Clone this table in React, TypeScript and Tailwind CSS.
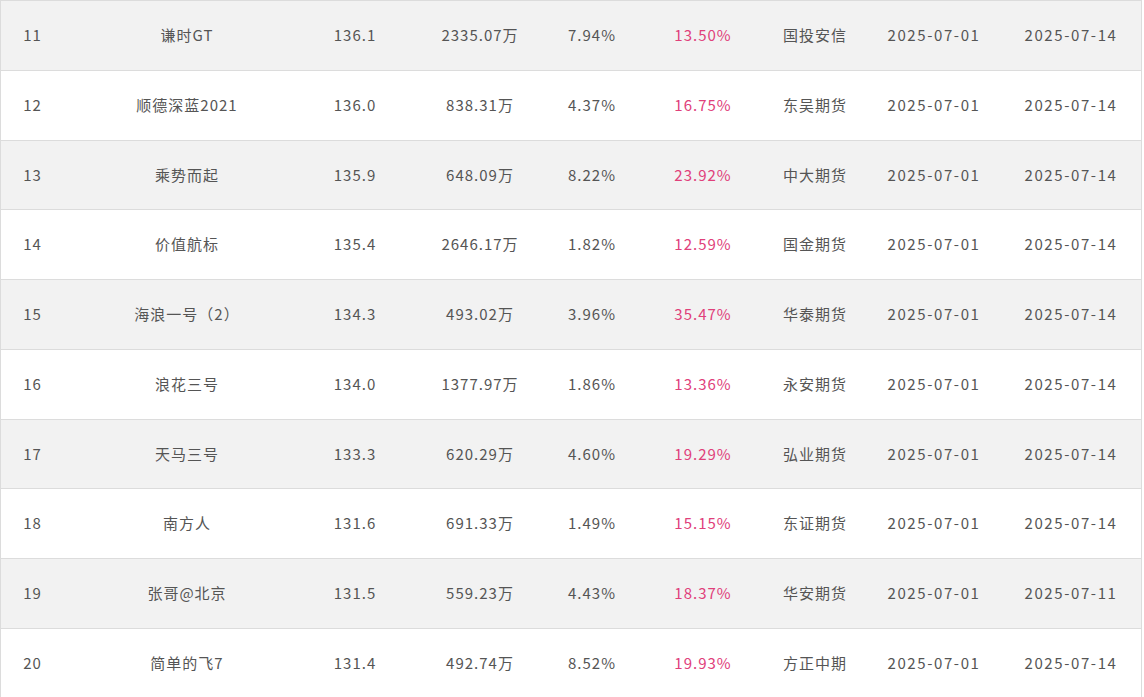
const rows = [
  ["11", "谦时GT", "136.1", "2335.07万", "7.94%", "13.50%", "国投安信", "2025-07-01", "2025-07-14"],
  ["12", "顺德深蓝2021", "136.0", "838.31万", "4.37%", "16.75%", "东吴期货", "2025-07-01", "2025-07-14"],
  ["13", "乘势而起", "135.9", "648.09万", "8.22%", "23.92%", "中大期货", "2025-07-01", "2025-07-14"],
  ["14", "价值航标", "135.4", "2646.17万", "1.82%", "12.59%", "国金期货", "2025-07-01", "2025-07-14"],
  ["15", "海浪一号（2）", "134.3", "493.02万", "3.96%", "35.47%", "华泰期货", "2025-07-01", "2025-07-14"],
  ["16", "浪花三号", "134.0", "1377.97万", "1.86%", "13.36%", "永安期货", "2025-07-01", "2025-07-14"],
  ["17", "天马三号", "133.3", "620.29万", "4.60%", "19.29%", "弘业期货", "2025-07-01", "2025-07-14"],
  ["18", "南方人", "131.6", "691.33万", "1.49%", "15.15%", "东证期货", "2025-07-01", "2025-07-14"],
  ["19", "张哥@北京", "131.5", "559.23万", "4.43%", "18.37%", "华安期货", "2025-07-01", "2025-07-11"],
  ["20", "简单的飞7", "131.4", "492.74万", "8.52%", "19.93%", "方正中期", "2025-07-01", "2025-07-14"],
];

export default function App() {
  return (
    <div className="w-[1142px] border-x border-[#dcdcdc] bg-white text-[15px] tracking-[1px] text-[#555] [font-family:'Noto_Sans_CJK_SC','Noto_Sans',sans-serif]">
      {rows.map((r, i) => (
        <div
          key={r[0]}
          className={`grid h-[69.75px] grid-cols-[63px_246px_90px_160px_64px_158px_66px_172px_102px_1fr] items-center border-t border-[#dcdcdc] ${
            i % 2 === 0 ? "bg-[#f2f2f2]" : "bg-white"
          }`}
        >
          {r.map((c, j) => (
            <div
              key={j}
              className={`text-center whitespace-nowrap ${j === 5 ? "text-[#e0407a]" : ""} ${
                j >= 7 ? "tracking-[1.6px]" : ""
              }`}
            >
              {c}
            </div>
          ))}
          <div />
        </div>
      ))}
    </div>
  );
}
